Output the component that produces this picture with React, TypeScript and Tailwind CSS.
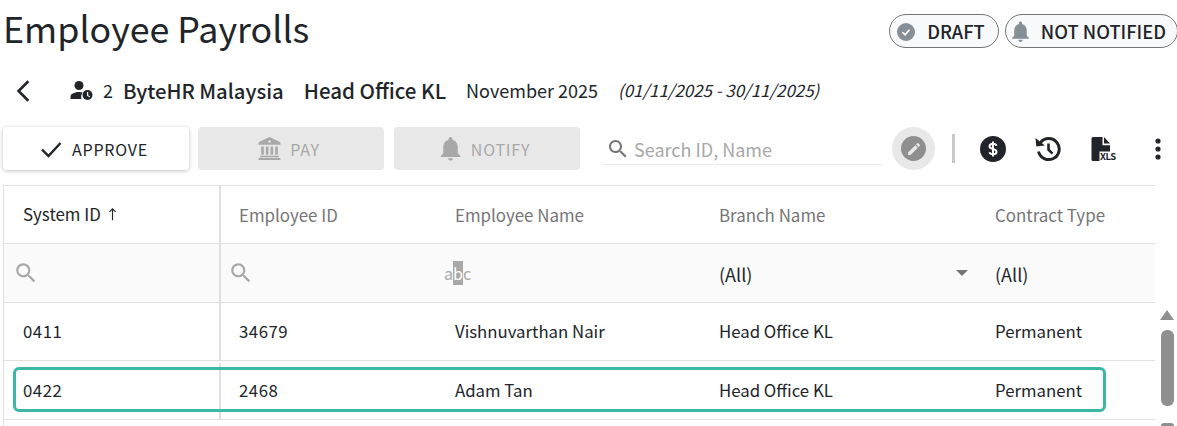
import type { ReactNode } from 'react'

const SEARCH = 'M15.5 14h-.79l-.28-.27C15.41 12.59 16 11.11 16 9.5 16 5.91 13.09 3 9.5 3S3 5.91 3 9.5 5.91 16 9.5 16c1.61 0 3.09-.59 4.23-1.57l.27.28v.79l5 4.99L20.49 19l-4.99-5zm-6 0C7.01 14 5 11.99 5 9.5S7.01 5 9.5 5 14 7.01 14 9.5 11.99 14 9.5 14z'
const BELL = 'M12 22c1.1 0 2-.9 2-2h-4c0 1.1.89 2 2 2zm6-6v-5c0-3.07-1.64-5.64-4.5-6.32V4c0-.83-.67-1.5-1.5-1.5s-1.5.67-1.5 1.5v.68C7.63 5.36 6 7.92 6 11v5l-2 2v1h16v-1l-2-2z'
const PENCIL = 'M3 17.25V21h3.75L17.81 9.94l-3.75-3.75L3 17.25zM20.71 7.04c.39-.39.39-1.02 0-1.41l-2.34-2.34c-.39-.39-1.02-.39-1.41 0l-1.83 1.83 3.75 3.75 1.83-1.83z'

function Icon({ d, className }: { d: string; className: string }) {
  return (
    <svg viewBox="0 0 24 24" fill="currentColor" className={className}>
      <path d={d} />
    </svg>
  )
}

function BankIcon({ className }: { className: string }) {
  return (
    <svg viewBox="0 0 24 24" fill="currentColor" className={className}>
      <path fillRule="evenodd" d="M12 1 1.5 6v2.5h21V6L12 1zm0 3a1.2 1.2 0 1 1 0 2.4A1.2 1.2 0 0 1 12 4z" />
      <path d="M4 10h2.5v8H4zM8.5 10H11v8H8.5zM13 10h2.500v8H13zM17.500 10H20v8h-2.500zM3 19h18v1.500H3zM1.500 21.200h21V23h-21z" />
    </svg>
  )
}

function PersonClockIcon() {
  return (
    <svg viewBox="0 0 24 24" className="h-[24px] w-[24px] text-[#212529]" fill="currentColor">
      <circle cx="10" cy="6.500" r="4.500" />
      <path d="M1.500 20v-2.500c0-3 5-4.500 8.500-4.500 1.400 0 2.700.2 3.800.6A6.500 6.500 0 0 0 12.500 20z" />
      <circle cx="18.500" cy="16" r="5" />
      <path d="M18 13h1.200v3.200l2 1.200-.6.900-2.600-1.500z" fill="#fff" />
    </svg>
  )
}

function DollarIcon() {
  return (
    <svg viewBox="0 0 30 30" className="h-[30px] w-[30px] text-[#212529]">
      <circle cx="15" cy="15" r="13" fill="currentColor" />
      <path d="M18.500 11.800c-.4-1.300-1.700-2-3.500-2-2 0-3.500.9-3.500 2.500 0 1.700 1.600 2.200 3.500 2.700 1.900.5 3.500 1 3.500 2.700 0 1.600-1.500 2.500-3.500 2.500-1.800 0-3.100-.7-3.500-2M15 7.500v15" fill="none" stroke="#fff" strokeWidth="2" />
    </svg>
  )
}

function HistoryIcon() {
  return (
    <svg viewBox="0 0 28 28" className="h-[28px] w-[28px] text-[#212529]" fill="none" stroke="currentColor">
      <path d="M7.500 7.500a10.500 10.500 0 1 1-2 9" strokeWidth="3" />
      <path d="M2.500 3 3.300 11.500l8.500-1z" fill="currentColor" stroke="none" />
      <path d="M15.500 8.500v6.200l4 4" strokeWidth="2.600" />
    </svg>
  )
}

function FileXlsIcon() {
  return (
    <div className="relative h-[26px] w-[24px]">
      <svg viewBox="0 0 24 26" className="h-[26px] w-[24px] text-[#212529]" fill="currentColor">
        <path d="M2 1h9.500v8.200H19V15.500H8.500V25H2a1.500 1.500 0 0 1-1.500-1.500v-21A1.500 1.500 0 0 1 2 1zM13 1l6 6.500h-6z" />
      </svg>
      <span className="absolute left-[9px] top-[15px] text-[9.5px] font-bold leading-[11px] tracking-[-0.4px] text-[#212529]">XLS</span>
    </div>
  )
}

function Chip({ icon, label, className }: { icon: ReactNode; label: string; className: string }) {
  return (
    <div className={`flex h-[34px] items-center rounded-[17px] border border-[#757575] bg-[#f8f9fa] pt-[1px] text-[18.3px] font-medium text-[#212529] ${className}`}>
      {icon}
      <span>{label}</span>
    </div>
  )
}

function ActionButton({ icon, label, className }: { icon: ReactNode; label: string; className: string }) {
  return (
    <button className={`flex h-[43px] w-[186px] items-center justify-center rounded-[4px] text-[16px] tracking-[0.8px] ${className}`}>
      {icon}
      <span>{label}</span>
    </button>
  )
}

const COLUMNS = ['w-[216px] pl-[18px]', 'w-[264px] pl-[18px]', 'w-[276px] pl-[18px]', 'w-[178px] pl-[18px]']

function Row({ cells, last }: { cells: string[]; last?: boolean }) {
  return (
    <div className={`relative flex border-b border-[#e0e0e0] text-[16.8px] text-[#212529] ${last ? 'h-[59px] pt-[2px]' : 'h-[58px]'}`}>
      <div className="flex w-[217px] items-center border-r-2 border-[#e0e0e0] pl-[19px] tracking-[0.5px]">{cells[0]}</div>
      <div className={`flex items-center tracking-[0.5px] ${COLUMNS[0]}`}>{cells[1]}</div>
      {cells.slice(2).map((c, i) => (
        <div key={c + i} className={`flex items-center ${COLUMNS[i + 1]}`}>{c}</div>
      ))}
      {last && (
        <div className="absolute left-[9px] top-[6px] h-[45px] w-[1093px] rounded-[6px] border-[3px] border-[#3ab8a4]" />
      )}
    </div>
  )
}

export default function App() {
  return (
    <div className="h-[426px] w-[1177px] overflow-hidden bg-white font-['Noto_Sans_CJK_SC','Noto_Sans',sans-serif]">
      {/* title + status chips */}
      <div className="flex h-[62px] items-start justify-between">
        <h1 className="ml-[3px] text-[35.8px] leading-[54px] text-[#212529]">Employee Payrolls</h1>
        <div className="mr-[-1px] mt-[14px] flex gap-[6px]">
          <Chip
            label="DRAFT"
            className="pl-[7px] pr-[13px]"
            icon={
              <span className="mr-[12px] flex h-[18px] w-[18px] items-center justify-center rounded-full bg-[#868e96] text-white">
                <svg viewBox="0 0 24 24" className="h-[12px] w-[12px]" fill="none" stroke="currentColor" strokeWidth="3.500">
                  <path d="M5 12.500l5 5 9-10" />
                </svg>
              </span>
            }
          />
          <Chip
            label="NOT NOTIFIED"
            className="pl-[2px] pr-[11px]"
            icon={<Icon d={BELL} className="mr-[8px] h-[25px] w-[25px] text-[#868e96]" />}
          />
        </div>
      </div>

      {/* payroll context */}
      <div className="flex h-[58px] items-center pb-[1px] text-[#212529]">
        <svg viewBox="0 0 24 24" className="ml-[11px] h-[26px] w-[26px]" fill="none" stroke="currentColor" strokeWidth="2.400">
          <path d="M16 3 7 12l9 9" />
        </svg>
        <div className="ml-[32px]"><PersonClockIcon /></div>
        <span className="ml-[10px] text-[18px]">2</span>
        <span className="ml-[10px] text-[20.3px] font-medium">ByteHR Malaysia</span>
        <span className="ml-[20px] text-[20.5px] font-medium">Head Office KL</span>
        <span className="ml-[20px] text-[18px]">November 2025</span>
        <span className="mb-[2px] ml-[20px] text-[16.9px] italic">(01/11/2025 - 30/11/2025)</span>
      </div>

      {/* toolbar */}
      <div className="mt-[7px] flex h-[43px] items-center pl-[3px]">
        <div className="flex">
          <ActionButton
            label="APPROVE"
            className="gap-[9px] bg-white pr-[5px] text-[#212529] shadow-[0_1px_4px_rgba(0,0,0,0.25)]"
            icon={
              <svg viewBox="0 0 24 24" className="h-[24px] w-[24px]" fill="none" stroke="currentColor" strokeWidth="2.400">
                <path d="M3 12.500l6.500 6.500L21.500 6" />
              </svg>
            }
          />
          <div className="ml-[9px]">
            <ActionButton
              label="PAY"
              className="gap-[8px] bg-[#e8e8e8] pr-[5px] text-[#a8a8a8]"
              icon={<BankIcon className="h-[25px] w-[25px]" />}
            />
          </div>
          <div className="ml-[10px]">
            <ActionButton
              label="NOTIFY"
              className="gap-[8px] bg-[#e8e8e8] pr-[7px] text-[#a8a8a8]"
              icon={<Icon d={BELL} className="-ml-[1px] -mr-[2px] h-[29px] w-[29px]" />}
            />
          </div>
        </div>
        <div className="mb-[5px] ml-[22px] flex h-[32px] w-[280px] items-center self-end border-b border-[#e9ecef] pl-[4px] text-[18px] text-[#a8a8a8]">
          <Icon d={SEARCH} className="mr-[4px] h-[24px] w-[24px] text-[#757575]" />
          <span className="pt-[2px]">Search ID, Name</span>
        </div>
        <div className="ml-[10px] flex h-[43px] w-[43px] items-center justify-center rounded-full bg-[#e8e8e8]">
          <span className="flex h-[25px] w-[25px] items-center justify-center rounded-full bg-[#8f8f8f] text-[#e8e8e8]">
            <Icon d={PENCIL} className="h-[16px] w-[16px]" />
          </span>
        </div>
        <div className="ml-[17px] h-[29px] w-[3px] bg-[#c8c8c8]" />
        <div className="ml-[23px]"><DollarIcon /></div>
        <div className="ml-[25px]"><HistoryIcon /></div>
        <div className="ml-[30px]"><FileXlsIcon /></div>
        <svg viewBox="0 0 6 22" className="ml-[40px] h-[22px] w-[6px] text-[#212529]" fill="currentColor">
          <circle cx="3" cy="3" r="2.600" />
          <circle cx="3" cy="11" r="2.600" />
          <circle cx="3" cy="19" r="2.600" />
        </svg>
      </div>

      {/* grid */}
      <div className="mt-[15px] flex">
        <div className="ml-[3px] w-[1152px] border-l border-t border-[#e0e0e0]">
          <div className="flex h-[58px] border-b border-[#e0e0e0] text-[16.9px] text-[#757575]">
            <div className="flex w-[217px] items-center gap-[6px] border-r-2 border-[#e0e0e0] pb-[2px] pl-[19px] text-[#212529]">
              <span>System ID</span>
              <svg viewBox="0 0 12 16" className="h-[14px] w-[11px]" fill="none" stroke="currentColor" strokeWidth="1.300">
                <path d="M6 15V2M2.500 5.500 6 2l3.500 3.500" />
              </svg>
            </div>
            {['Employee ID', 'Employee Name', 'Branch Name', 'Contract Type'].map((h, i) => (
              <div key={h} className={`flex items-center ${COLUMNS[i]}`}>{h}</div>
            ))}
          </div>
          <div className="flex h-[59px] border-b border-[#e0e0e0] bg-[#fafafa] text-[18px] text-[#212529]">
            <div className="flex w-[217px] items-center border-r-2 border-[#e0e0e0] pl-[9px]">
              <Icon d={SEARCH} className="h-[26px] w-[26px] text-[#a8a8a8]" />
            </div>
            <div className="flex w-[216px] items-center pl-[7px]">
              <Icon d={SEARCH} className="h-[26px] w-[26px] text-[#a8a8a8]" />
            </div>
            <div className="flex w-[264px] items-center pl-[7px] text-[16px] text-[#a8a8a8]">
              <span>a</span>
              <span className="bg-[#a8a8a8] text-white">b</span>
              <span>c</span>
            </div>
            <div className="flex w-[276px] items-center justify-between pl-[18px] pr-[9px]">
              <span className="pt-[2px]">(All)</span>
              <span className="mb-[1px] h-0 w-0 border-x-[6px] border-t-[6px] border-x-transparent border-t-[#757575]" />
            </div>
            <div className="flex w-[178px] items-center pl-[18px] pt-[2px]">(All)</div>
          </div>
          <Row cells={['0411', '34679', 'Vishnuvarthan Nair', 'Head Office KL', 'Permanent']} />
          <Row last cells={['0422', '2468', 'Adam Tan', 'Head Office KL', 'Permanent']} />
        </div>
        {/* scrollbar */}
        <div className="ml-[2px] mt-[117px] flex w-[20px] flex-col items-center pt-[8px]">
          <span className="h-0 w-0 border-x-[7.5px] border-b-[10px] border-x-transparent border-b-[#8f8f8f]" />
          <span className="mt-[10px] h-[76px] w-[13px] rounded-[6px] bg-[#8f8f8f]" />
          <span className="mt-[17px] h-[8px] w-[13px] rounded-t-[3px] bg-[#8f8f8f]" />
        </div>
      </div>
    </div>
  )
}
